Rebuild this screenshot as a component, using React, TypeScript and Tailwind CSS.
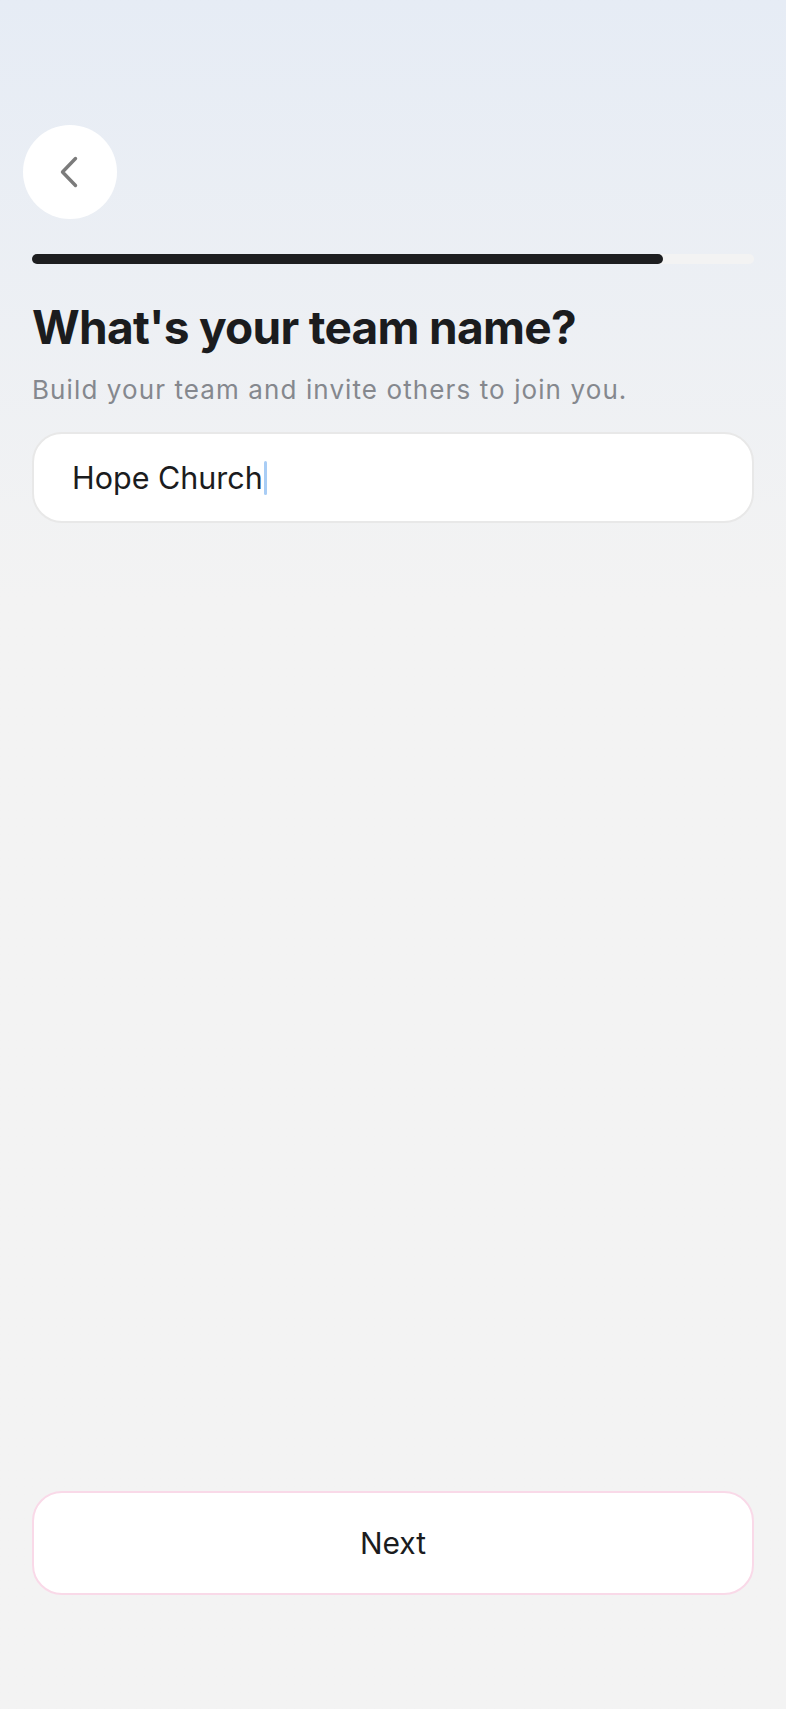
export default function App() {
  const progress = 87.4

  return (
    <div
      className="flex h-[1709px] w-full flex-col bg-gradient-to-b from-[#e6ecf5] via-[#f3f3f3] via-35% to-[#f3f3f3] px-8"
      style={{ fontFamily: 'Inter, "Noto Sans", sans-serif' }}
    >
      <button
        type="button"
        aria-label="Back"
        className="-ml-[9px] mt-[125px] flex h-[94px] w-[94px] items-center justify-center rounded-full bg-white"
      >
        <svg width="18" height="32" viewBox="0 0 18 32" fill="none" aria-hidden="true" className="-ml-[2px]">
          <polyline
            points="15.5,2.5 2.5,16 15.5,29.5"
            stroke="#7b7b7b"
            strokeWidth="3.4"
            strokeLinecap="round"
            strokeLinejoin="round"
          />
        </svg>
      </button>

      <div className="mt-[35px] h-[10px] w-full rounded-full bg-[#f3f3f3]">
        <div className="h-full rounded-full bg-[#1d1e20]" style={{ width: `${progress}%` }} />
      </div>

      <h1 className="mt-[36px] text-[46px] font-bold leading-[54px] tracking-[-0.7px] text-[#1b1c1e]">
        What's your team name?
      </h1>
      <p className="mt-[19px] text-[26px] leading-[34px] tracking-[1.1px] text-[#85888e]">
        Build your team and invite others to join you.
      </p>

      <div className="mt-[25px] flex h-[91px] items-center rounded-[30px] border-2 border-[#e8e8e8] bg-white px-[38px]">
        <span className="text-[30.5px] leading-[36px] text-[#1b1c1e]">Hope Church</span>
        <span className="ml-[1px] h-[34px] w-[3px] rounded-full bg-[#a9cdf5]" />
      </div>

      <button
        type="button"
        className="mb-[114px] mt-auto flex h-[104px] w-full items-center justify-center rounded-[30px] border-2 border-[#f9d9e8] bg-white text-[30px] text-[#1b1c1e]"
      >
        Next
      </button>
    </div>
  )
}
